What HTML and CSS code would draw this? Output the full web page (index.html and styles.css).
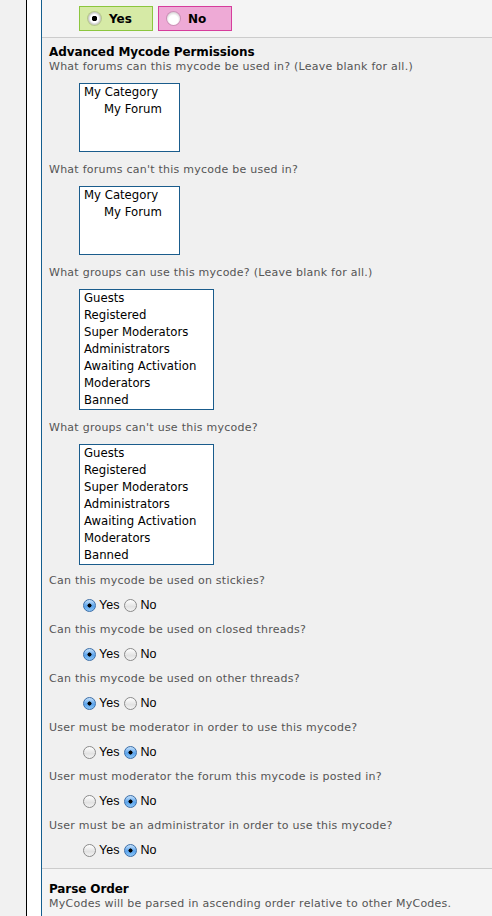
FILE: index.html
```html
<!DOCTYPE html>
<html lang="en">
<head>
  <meta charset="UTF-8" />
  <meta name="viewport" content="width=device-width, initial-scale=1.0" />
  <title>Edit MyCode</title>
  <link rel="stylesheet" href="styles.css">
</head>
<body>
  <div class="page">
    <div class="gutter"></div>
    <div class="sheet">
      <div class="form">
        <div class="row row-light">
          <div class="yesno">
            <label class="choice choice-yes"><input type="radio" name="active" checked /> Yes</label>
            <label class="choice choice-no"><input type="radio" name="active" /> No</label>
          </div>
        </div>

        <div class="row row-dark">
          <div class="title">Advanced Mycode Permissions</div>
          <div class="desc">What forums can this mycode be used in? (Leave blank for all.)</div>
          <ul class="listbox listbox-forums">
            <li>My Category</li>
            <li class="sub">My Forum</li>
          </ul>

          <div class="desc q">What forums can't this mycode be used in?</div>
          <ul class="listbox listbox-forums">
            <li>My Category</li>
            <li class="sub">My Forum</li>
          </ul>

          <div class="desc q">What groups can use this mycode? (Leave blank for all.)</div>
          <ul class="listbox listbox-groups">
            <li>Guests</li>
            <li>Registered</li>
            <li>Super Moderators</li>
            <li>Administrators</li>
            <li>Awaiting Activation</li>
            <li>Moderators</li>
            <li>Banned</li>
          </ul>

          <div class="desc q">What groups can't use this mycode?</div>
          <ul class="listbox listbox-groups">
            <li>Guests</li>
            <li>Registered</li>
            <li>Super Moderators</li>
            <li>Administrators</li>
            <li>Awaiting Activation</li>
            <li>Moderators</li>
            <li>Banned</li>
          </ul>

          <div class="desc q first">Can this mycode be used on stickies?</div>
          <div class="radios">
            <label><input type="radio" name="stickies" checked />Yes</label>
            <label><input type="radio" name="stickies" />No</label>
          </div>

          <div class="desc">Can this mycode be used on closed threads?</div>
          <div class="radios">
            <label><input type="radio" name="closed" checked />Yes</label>
            <label><input type="radio" name="closed" />No</label>
          </div>

          <div class="desc">Can this mycode be used on other threads?</div>
          <div class="radios">
            <label><input type="radio" name="other" checked />Yes</label>
            <label><input type="radio" name="other" />No</label>
          </div>

          <div class="desc">User must be moderator in order to use this mycode?</div>
          <div class="radios">
            <label><input type="radio" name="mod" />Yes</label>
            <label><input type="radio" name="mod" checked />No</label>
          </div>

          <div class="desc">User must moderator the forum this mycode is posted in?</div>
          <div class="radios">
            <label><input type="radio" name="modforum" />Yes</label>
            <label><input type="radio" name="modforum" checked />No</label>
          </div>

          <div class="desc">User must be an administrator in order to use this mycode?</div>
          <div class="radios">
            <label><input type="radio" name="admin" />Yes</label>
            <label><input type="radio" name="admin" checked />No</label>
          </div>
        </div>

        <div class="row row-light">
          <div class="title">Parse Order</div>
          <div class="desc">MyCodes will be parsed in ascending order relative to other MyCodes.</div>
        </div>
      </div>
    </div>
  </div>
</body>
</html>
```

FILE: styles.css
```css
body {
  margin: 0;
  background: #f1f1f1;
  font-family: "DejaVu Sans", Verdana, sans-serif;
  overflow: hidden;
}
.page {
  display: flex;
  min-height: 916px;
}
.gutter {
  width: 26px;
  flex: none;
}
.sheet {
  flex: 1;
  background: #fff;
  border-left: 1px solid #000;
  padding-left: 14px;
  display: flex;
}
.form {
  flex: 1;
  border-left: 1px solid #155e8e;
  background: #f0f0f0;
}
.row {
  padding: 0 7px;
}
.row-light {
  background: #f4f4f4;
}
.row-dark {
  background: #f0f0f0;
  border-top: 1px solid #cccccc;
  border-bottom: 1px solid #cccccc;
  padding-top: 7px;
  padding-bottom: 1px;
}
.row-light:last-child {
  padding-top: 13px;
  padding-bottom: 20px;
}

.yesno {
  display: flex;
  gap: 5px;
  padding: 6px 0 6px 30px;
}
.choice {
  width: 74px;
  height: 25px;
  display: flex;
  align-items: center;
  gap: 8px;
  padding-left: 8px;
  box-sizing: border-box;
  font-size: 12px;
  font-weight: bold;
  color: #000;
}
.choice-yes {
  background: #d6eaa6;
  border: 1px solid #8cc63f;
}
.choice-no {
  background: #eeaad6;
  border: 1px solid #d63d9c;
}
.choice input {
  appearance: none;
  margin: 0;
  width: 13px;
  height: 13px;
  border-radius: 50%;
  background: radial-gradient(circle at 50% 60%, #fff 45%, #ddd 70%, #999 100%);
  box-shadow: 0 0 0 1px rgba(0, 0, 0, 0.15);
}
.choice input:checked {
  background: radial-gradient(circle, #000 0 2.5px, #fff 3px 4px, #bbb 6.5px);
}

.title {
  font-size: 12px;
  font-weight: bold;
  color: #000;
  line-height: 14px;
  letter-spacing: -0.1px;
}
.desc {
  font-size: 11px;
  letter-spacing: 0.25px;
  color: #555;
  line-height: 16px;
}
.q {
  margin-top: 10px;
}
.q.first {
  margin-top: 8px;
}

.listbox {
  list-style: none;
  margin: 8px 0 0 30px;
  padding: 0 4px;
  background: #fff;
  border: 1px solid #1a5c8c;
  font-size: 11.7px;
  color: #000;
  line-height: 17px;
}
.listbox-forums {
  width: 91px;
  height: 67px;
}
.listbox-groups {
  width: 125px;
  height: 119px;
}
.listbox .sub {
  padding-left: 20px;
}

.radios {
  display: flex;
  gap: 5px;
  padding: 8px 0 8px 34px;
  font-family: "Liberation Sans", Arial, sans-serif;
  font-size: 12.5px;
  color: #000;
  line-height: 17px;
}
.radios label {
  display: flex;
  align-items: center;
  gap: 3px;
}
.radios input {
  appearance: none;
  margin: 0;
  width: 13px;
  height: 13px;
  border-radius: 50%;
  border: 1px solid #8a8a8a;
  box-sizing: border-box;
  background: linear-gradient(#ffffff, #e2e2e2 60%, #f4f4f4);
}
.radios input:checked {
  border-color: #3d6fa8;
  background: radial-gradient(circle, #000 0 1.8px, transparent 2.3px),
    linear-gradient(#c7e2fb, #5aa3ec 55%, #8cc6f7);
}
```
